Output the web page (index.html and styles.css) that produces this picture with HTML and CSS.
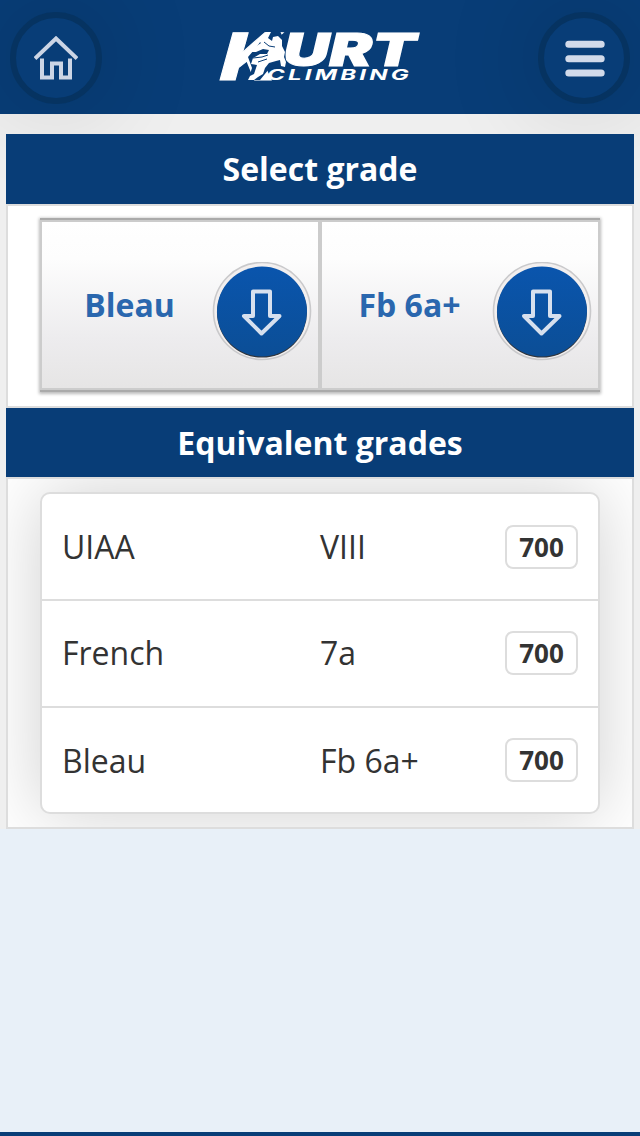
FILE: index.html
```html
<!DOCTYPE html>
<html lang="en">
<head>
<meta charset="utf-8">
<title>Kurt Climbing</title>
<link rel="stylesheet" href="styles.css">
</head>
<body>
<header class="topbar">
  <a class="round-button" aria-label="Home">
    <svg width="44" height="44" viewBox="0 0 44 44"><path class="icon-line" d="M1 22.500 22 2.500l21 20M8 22.500v19h10V27.500h9v14h9V22.500"/></svg>
  </a>
  <svg class="logo" width="202" height="52" viewBox="0 0 202 52" aria-label="Kurt Climbing">
    <text class="logo-word" transform="translate(1 48.500) skewX(-5)" font-size="65" textLength="56" lengthAdjust="spacingAndGlyphs">K</text>
    <text class="logo-word" transform="translate(64 34.500)" font-size="45" textLength="133" lengthAdjust="spacingAndGlyphs">URT</text>
    <path class="climber-gap" d="M39 14 49 0h12l5 11 1 24-17 3-9 11H29l4-12-4-11 6-7z"/>
    <path class="climber" d="M47 1h5l-3 6 4 3 1-4 5-1 4 4 0 6 3 6-1 5 2 5-1 5-4-1-1-6-4 1-7 2-4 5-2 6-5 3-4 3h-6l2-4 4-2 3-9-6-1 2-6 7-4h7l2-4-6-1-7 3-5 0 4-5 6-4-3-3z"/>
    <path class="climber-crease" d="m45 11 5 4 6 1M34 27l9-1 6-2m-10 7 9-3"/>
    <text class="logo-sub" transform="translate(48 49.200)" font-size="15" textLength="145" lengthAdjust="spacingAndGlyphs">CLIMBING</text>
  </svg>
  <a class="round-button" aria-label="Menu">
    <svg width="44" height="44" viewBox="0 0 44 44"><path class="menu-line" d="M6.800 8.300h32.400M6.800 22.700h32.400M6.800 37h32.400"/></svg>
  </a>
</header>
<main class="content">
  <h2 class="heading">Select grade</h2>
  <section class="panel panel-select">
    <div class="selects">
      <div class="select"><span class="select-label">Bleau</span>
        <svg class="select-icon" width="100" height="100" viewBox="0 0 100 100">
          <defs><linearGradient id="disc" x2="0" y2="1"><stop stop-color="#0a55ad"/><stop offset="1" stop-color="#0b4e96"/></linearGradient></defs>
          <circle class="disc-rim" cx="50" cy="49" r="48.500"/><circle class="disc-shade" cx="50" cy="50.600" r="45"/><circle cx="50" cy="49.500" r="45" fill="url(#disc)"/>
          <path class="disc-arrow" d="M41 29.500h17V54h9.500L49.500 71.500 32 54h9z"/>
        </svg>
      </div>
      <div class="select"><span class="select-label">Fb 6a+</span>
        <svg class="select-icon" width="100" height="100" viewBox="0 0 100 100">
          <circle class="disc-rim" cx="50" cy="49" r="48.500"/><circle class="disc-shade" cx="50" cy="50.600" r="45"/><circle cx="50" cy="49.500" r="45" fill="url(#disc)"/>
          <path class="disc-arrow" d="M41 29.500h17V54h9.500L49.500 71.500 32 54h9z"/>
        </svg>
      </div>
    </div>
  </section>
  <h2 class="heading heading-equiv">Equivalent grades</h2>
  <section class="panel panel-grades">
    <ul class="grades">
      <li class="grade"><span>UIAA</span><span>VIII</span><b class="score">700</b></li>
      <li class="grade grade-mid"><span>French</span><span>7a</span><b class="score">700</b></li>
      <li class="grade"><span>Bleau</span><span>Fb 6a+</span><b class="score">700</b></li>
    </ul>
  </section>
</main>
<footer class="footer"></footer>
</body>
</html>
```
FILE: styles.css
```css
* { box-sizing: border-box; }
body {
  margin: 0;
  height: 1136px;
  overflow: hidden;
  display: flex;
  flex-direction: column;
  background: #e8f0f8;
  color: #333;
  font-family: "Open Sans", "Noto Sans", sans-serif;
}
.topbar {
  height: 114px;
  flex: none;
  display: flex;
  justify-content: space-between;
  align-items: flex-start;
  padding: 12px 10px;
  background: #083d77;
}
.round-button {
  position: relative;
  z-index: 1;
  width: 92px;
  height: 92px;
  display: flex;
  align-items: center;
  justify-content: center;
  border: 6px solid #063361;
  border-radius: 50%;
  box-shadow: 0 0 100px rgba(0, 0, 0, .18);
}
.icon-line { fill: none; stroke: #ccd5e5; stroke-width: 4; }
.menu-line { fill: none; stroke: #d2daea; stroke-width: 7; stroke-linecap: round; }
.logo { margin-top: 19px; overflow: visible; }
.logo-word {
  font-family: Inter, "Liberation Sans", sans-serif;
  font-weight: 900;
  font-style: italic;
  fill: #fff;
  stroke: #fff;
  stroke-width: 1;
}
.logo-sub {
  font-family: Inter, "Liberation Sans", sans-serif;
  font-weight: 700;
  font-style: italic;
  letter-spacing: 2px;
  fill: #fff;
}
.climber-gap { fill: #083d77; }
.climber { fill: #fff; }
.climber-crease { fill: none; stroke: #083d77; stroke-width: 1; }
.content {
  display: flex;
  flex-direction: column;
  padding: 20px 6px 0;
  background: #efefef;
}
.heading {
  position: relative;
  z-index: 2;
  height: 70px;
  margin: 0;
  background: #083d77;
  color: #fff;
  font-size: 32px;
  line-height: 70px;
  font-weight: 700;
  text-align: center;
}
.heading-equiv { height: 69px; }
.panel { border: 2px solid #ddd; background: #fff; }
.panel-select { height: 204px; padding: 12px 32px; }
.selects {
  height: 174px;
  display: grid;
  grid-template-columns: 1fr 1fr;
  border-top: 2px solid #aaa;
  border-bottom: 2px solid #aaa;
  box-shadow: 0 1px 3px 1px #bbb;
}
.select {
  display: grid;
  grid-template-columns: 1fr 100px;
  padding: 40px 6px 0 0;
  border: 2px solid #ccc;
  background: linear-gradient(#fff 0%, #fdfdfd 22%, #edecee 70%, #e6e5e5 100%);
}
.select-label {
  padding-left: 5px;
  color: #2a67ae;
  font-size: 32px;
  line-height: 86px;
  font-weight: 700;
  text-align: center;
}
.disc-rim { fill: #f2efef; stroke: #c9c9cb; stroke-width: 1.6; }
.disc-shade { fill: #30363e; }
.disc-arrow { fill: none; stroke: #d7e0ee; stroke-width: 4; stroke-linejoin: round; }
.panel-grades { height: 352px; padding: 13px 32px; overflow: hidden; }
.grades {
  height: 322px;
  margin: 0;
  padding: 0;
  display: grid;
  grid-template-rows: 107px 107px 1fr;
  list-style: none;
  border: 2px solid #ddd;
  border-radius: 10px;
  background: #fff;
  box-shadow: 0 0 72px rgba(0, 0, 0, .19);
}
.grade {
  display: grid;
  grid-template-columns: 258px 1fr auto;
  align-items: center;
  padding: 0 20px;
  border-bottom: 2px solid #ddd;
  font-size: 32px;
}
.grade-mid { padding-bottom: 2px; }
.grade:last-child { border-bottom: 0; }
.score {
  width: 73px;
  height: 44px;
  border: 2px solid #ddd;
  border-radius: 8px;
  font-size: 26px;
  line-height: 40px;
  text-align: center;
}
.footer { height: 4px; flex: none; margin-top: auto; background: #083d77; }
```
